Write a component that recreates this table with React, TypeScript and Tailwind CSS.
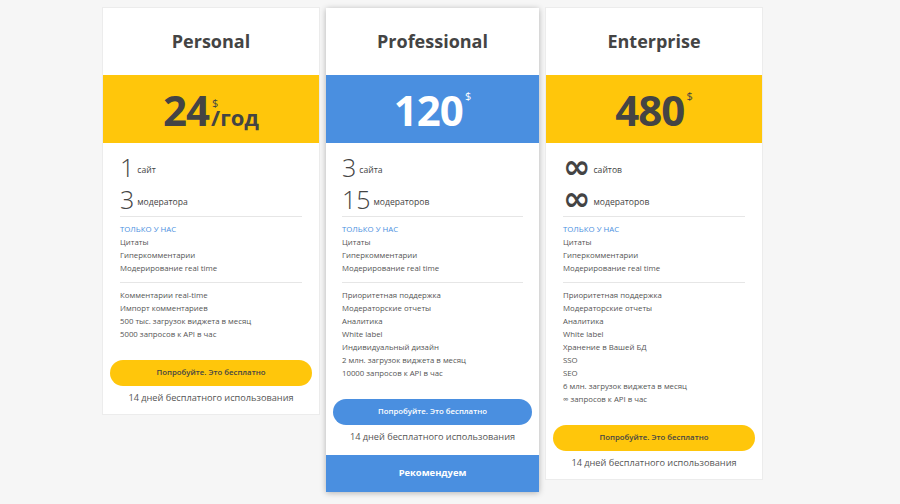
import React from "react";

type Plan = {
  title: string;
  price: string;
  perYear?: boolean;
  color: "yellow" | "blue";
  sites: React.ReactNode;
  sitesLabel: string;
  mods: React.ReactNode;
  modsLabel: string;
  extra: string[];
  recommended?: boolean;
  shadow?: boolean;
};

const Inf = () => (
  <span
    className="inline-block text-[33px] leading-[26px] font-bold"
    style={{ fontFamily: '"DejaVu Sans", sans-serif' }}
  >
    ∞
  </span>
);

const plans: Plan[] = [
  {
    title: "Personal",
    price: "24",
    perYear: true,
    color: "yellow",
    sites: "1",
    sitesLabel: "сайт",
    mods: "3",
    modsLabel: "модератора",
    extra: [
      "Комментарии real-time",
      "Импорт комментариев",
      "500 тыс. загрузок виджета в месяц",
      "5000 запросов к API в час",
    ],
  },
  {
    title: "Professional",
    price: "120",
    color: "blue",
    sites: "3",
    sitesLabel: "сайта",
    mods: "15",
    modsLabel: "модераторов",
    extra: [
      "Приоритетная поддержка",
      "Модераторские отчеты",
      "Аналитика",
      "White label",
      "Индивидуальный дизайн",
      "2 млн. загрузок виджета в месяц",
      "10000 запросов к API в час",
    ],
    recommended: true,
    shadow: true,
  },
  {
    title: "Enterprise",
    price: "480",
    color: "yellow",
    sites: <Inf />,
    sitesLabel: "сайтов",
    mods: <Inf />,
    modsLabel: "модераторов",
    extra: [
      "Приоритетная поддержка",
      "Модераторские отчеты",
      "Аналитика",
      "White label",
      "Хранение в Вашей БД",
      "SSO",
      "SEO",
      "6 млн. загрузок виджета в месяц",
      "∞ запросов к API в час",
    ],
  },
];

function Card({ p }: { p: Plan }) {
  const yellow = p.color === "yellow";
  return (
    <div
      className={
        "bg-white flex flex-col " +
        (p.shadow
          ? "w-[213px] mt-[1px] shadow-[0_1px_6px_rgba(0,0,0,0.28)]"
          : "w-[218px] border border-[#ececec]")
      }
    >
      <div className="h-[67px] flex items-center justify-center text-[18px] font-bold text-[#444]">
        {p.title}
      </div>
      <div
        className={
          "h-[68px] flex items-center justify-center " +
          (yellow ? "bg-[#ffc60b] text-[#444]" : "bg-[#4a8fe0] text-white")
        }
      >
        <div className="flex items-end font-bold leading-none pt-[2px]">
          <span className="text-[42px] leading-none tracking-[-1px]">{p.price}</span>
          {p.perYear ? (
            <span className="inline-flex flex-col items-start ml-[2px] mb-[4px]">
              <span className="text-[11px] font-normal leading-[9px] ml-[1px]">$</span>
              <span className="text-[22px] leading-[20px]">/год</span>
            </span>
          ) : (
            <span className="self-start text-[11px] font-normal ml-[2px] mt-[1px]">$</span>
          )}
        </div>
      </div>
      <div className={p.shadow ? "px-[16px]" : "px-[17px]"}>
        <div className="pt-[8px]">
          <div className="h-[32px] flex items-center text-[#444]">
            <span className="text-[25px] font-light leading-none">{p.sites}</span>
            <span className="text-[8.6px] ml-[3px] mt-[6px]">{p.sitesLabel}</span>
          </div>
          <div className="h-[32px] flex items-center text-[#444]">
            <span className="text-[25px] font-light leading-none">{p.mods}</span>
            <span className="text-[8.6px] ml-[3px] mt-[6px]">{p.modsLabel}</span>
          </div>
        </div>
        <div className="border-t border-[#e6e6e6] mt-[1px] pt-[6px] pb-[7px] text-[7.8px] leading-[13px] text-[#555]">
          <div className="text-[#4a8fe0]">ТОЛЬКО У НАС</div>
          <div>Цитаты</div>
          <div>Гиперкомментарии</div>
          <div>Модерирование real time</div>
        </div>
        <div className="border-t border-[#e6e6e6] pt-[6px] text-[7.8px] leading-[13px] text-[#555]">
          {p.extra.map((e) => (
            <div key={e}>{e}</div>
          ))}
        </div>
      </div>
      <div className="px-[7px] pt-[19px]">
        <div
          className={
            "h-[26px] rounded-full flex items-center justify-center text-[7.8px] font-semibold " +
            (yellow ? "bg-[#ffc60b] text-[#444]" : "bg-[#4a8fe0] text-white")
          }
        >
          Попробуйте. Это бесплатно
        </div>
      </div>
      <div className="text-center text-[9.2px] text-[#555] leading-[16px] mt-[4px] mb-[8px]">
        14 дней бесплатного использования
      </div>
      {p.recommended && (
        <div className="h-[37px] bg-[#4a8fe0] text-white text-[9.4px] font-bold flex items-center justify-center mt-[2px]">
          Рекомендуем
        </div>
      )}
    </div>
  );
}

export default function App() {
  return (
    <div
      className="w-[900px] h-[504px] bg-[#f6f6f6] overflow-hidden"
      style={{ fontFamily: '"Open Sans", "Noto Sans", sans-serif' }}
    >
      <div className="flex items-start pt-[7px] pl-[102px] gap-[6px]">
        {plans.map((p) => (
          <Card key={p.title} p={p} />
        ))}
      </div>
    </div>
  );
}
